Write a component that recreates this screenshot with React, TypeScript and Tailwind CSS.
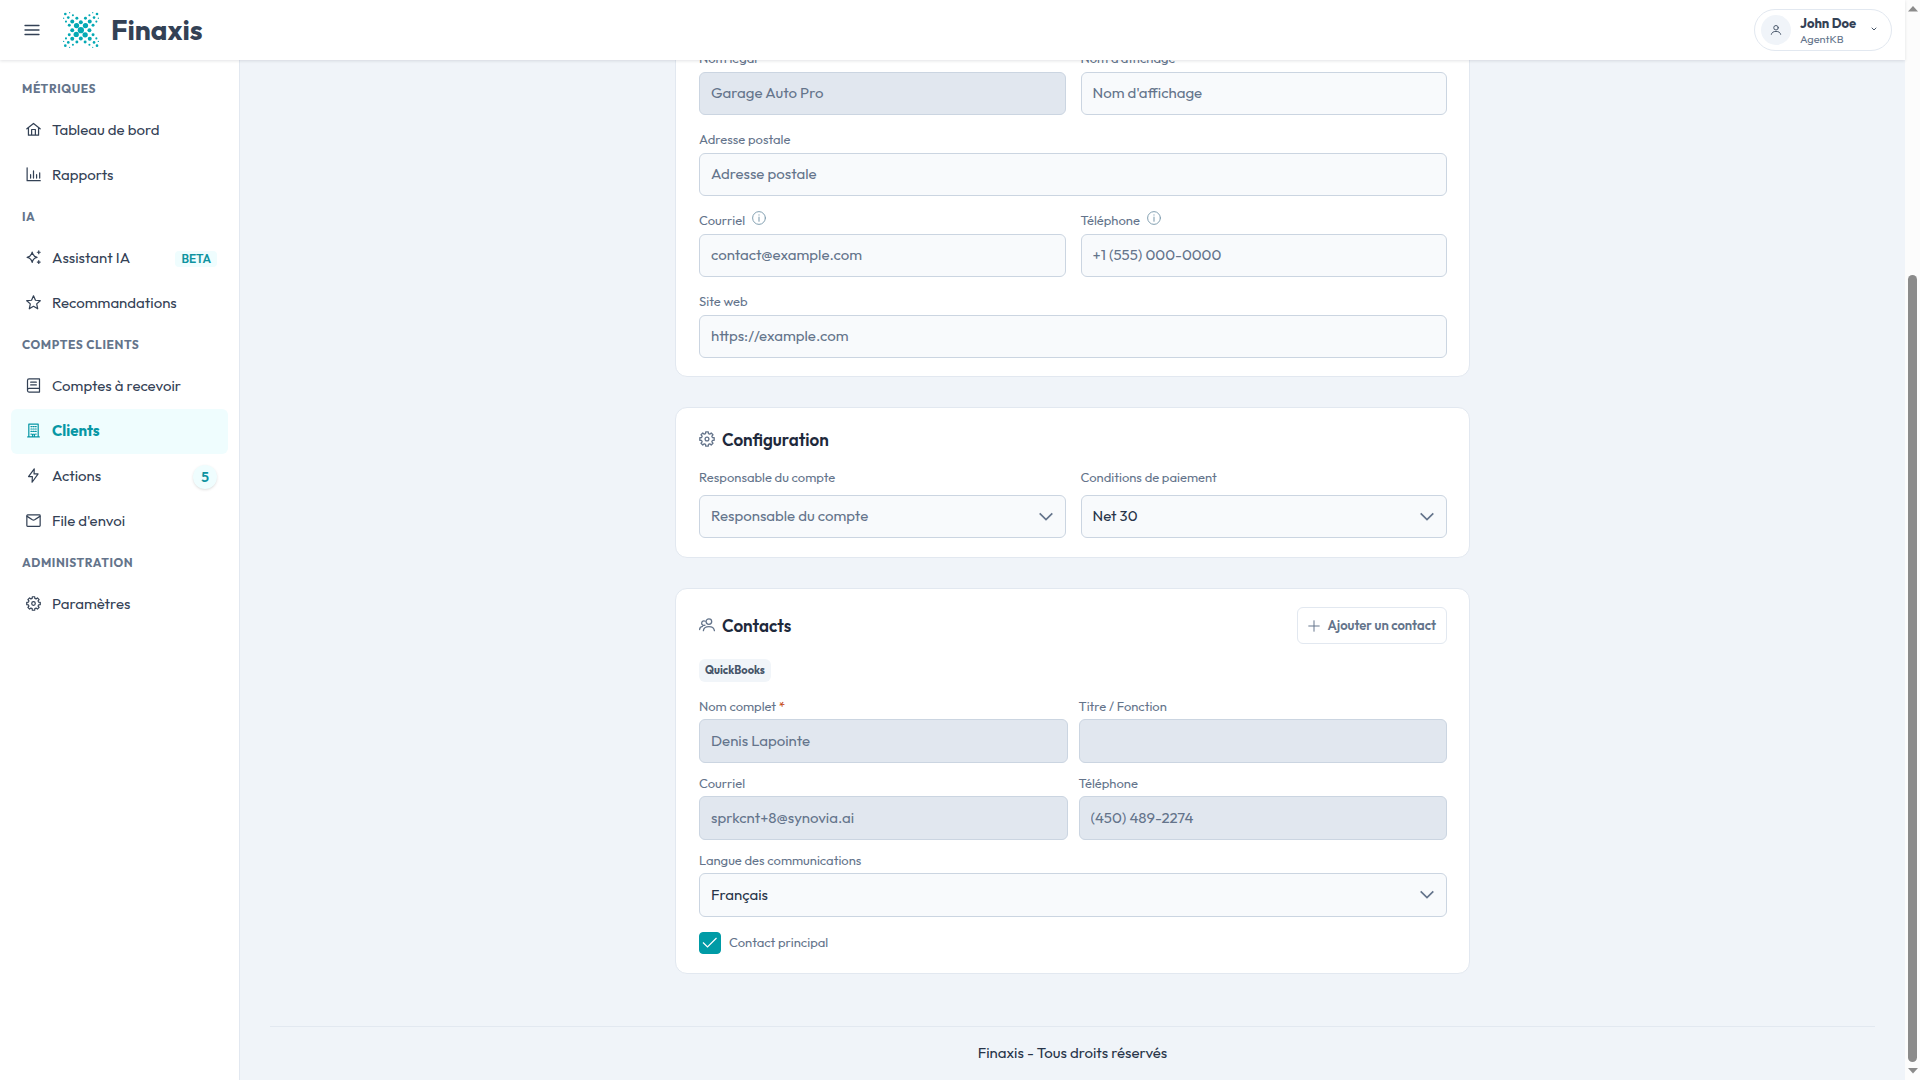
import { useState } from "react";
import type { ReactNode } from "react";

interface IconProps {
  className?: string;
  children: ReactNode;
}

const Icon: React.FC<IconProps> = ({ className = "size-[15px]", children }) => (
  <svg
    viewBox="0 0 16 16"
    className={`shrink-0 ${className}`}
    fill="none"
    stroke="currentColor"
    strokeWidth="1.3"
    strokeLinecap="round"
    strokeLinejoin="round"
    aria-hidden="true"
  >
    {children}
  </svg>
);

const HomeIcon = () => (
  <Icon>
    <path d="M.9 7.2 8 1.6l7.1 5.6M2.6 6v8.100h10.800V6M6 14V8h4v6" />
  </Icon>
);

const ChartIcon = () => (
  <Icon>
    <path d="M1.200.8v13.800h14M4.900 8.200v3.600M8 4.200v7.600M11.300 8.200v3.600M14.600 6.200v5.600" />
  </Icon>
);

const SparklesIcon = () => (
  <Icon>
    <path d="M6.600 2.200c.6 3.600 1.800 4.800 5.200 5.600-3.400.7-4.600 2-5.200 5.500-.6-3.500-1.900-4.800-5.400-5.500C4.700 7 6 5.800 6.600 2.200Z" />
    <path d="M13.600.9v3M12.100 2.400h3M13.600 11.400v3M12.100 12.900h3" />
  </Icon>
);

const StarIcon = () => (
  <Icon>
    <path d="m8 .9 2.100 4.700 5.100.5-3.800 3.400 1.100 5.200L8 12l-4.500 2.700 1.100-5.200L.8 6.100l5.100-.5L8 .9Z" />
  </Icon>
);

const BookIcon = () => (
  <Icon>
    <path d="M14.400 11V1H3.200c-1 0-1.600.6-1.600 1.600v10.800c0 1 .6 1.600 1.600 1.600h11.200v-4H3.200c-1 0-1.600.7-1.600 1.900M5 4.400h6M5 7.400h6" />
  </Icon>
);

const BuildingIcon = () => (
  <Icon>
    <path d="M3 14.600V1.200h10v13.400M1.800 14.900h12.400M7 14.500V12h2v2.500M5.300 3.800h1M7.600 3.800h1M9.900 3.800h1M5.300 6.400h1M7.600 6.400h1M9.900 6.400h1M5.300 9h1M7.600 9h1M9.900 9h1M5.300 11.800h.5M10.300 11.800h.5" />
  </Icon>
);

const BoltIcon = () => (
  <Icon>
    <path d="M8.800.9 2.700 9.200h4.100L6.500 15.200l6.400-8.900H8.600L8.800.9Z" />
  </Icon>
);

const MailIcon = () => (
  <Icon>
    <rect x=".9" y="2" width="14.200" height="12.200" rx=".8" />
    <path d="m1.200 3.600 5.600 3.700c.8.500 1.600.5 2.400 0l5.600-3.700" />
  </Icon>
);

// Eight teeth, each one given by its two outer and two inner corners
const gearPoints = Array.from({ length: 8 })
  .flatMap((_, i) =>
    [
      [-15, 5.600],
      [-10, 7.300],
      [10, 7.300],
      [15, 5.600],
    ].map(([offset, radius]) => {
      const angle = ((i * 45 + offset) * Math.PI) / 180;
      return `${(8 + radius * Math.sin(angle)).toFixed(2)},${(8 - radius * Math.cos(angle)).toFixed(2)}`;
    })
  )
  .join(" ");

const GearIcon: React.FC<{ className?: string }> = ({ className }) => (
  <Icon className={className}>
    <polygon points={gearPoints} />
    <circle cx="8" cy="8" r="1.900" />
  </Icon>
);

const UsersIcon = () => (
  <Icon className="size-4">
    <circle cx="9.900" cy="4.600" r="2.800" />
    <path d="M4.400 13.600c.3-2.700 2.300-4 5.500-4s5.100 1.300 5.500 4M6 8.200a2.300 2.300 0 1 1 .2-4M.6 12.500c.1-1.900 1.100-2.900 3-3.200" />
  </Icon>
);

const InfoIcon = () => (
  <Icon className="mb-1 size-3.5 text-[#7e9cae]">
    <circle cx="8" cy="8" r="7.300" strokeWidth="1.100" />
    <path d="M8 7v4.600M8 4.400v.3" strokeWidth="1.200" />
  </Icon>
);

// [x, y, r] around the centre dot
const logoDots: number[][] = [
  [54, 55, 9.500],
  [41, 41, 8], [68, 41, 8], [40, 68, 8], [67, 69, 8],
  [54, 31, 6], [54, 80, 6], [28, 55, 6], [80, 55, 6],
  [28, 29, 6], [81, 29, 6], [28, 81, 6], [81, 81, 6],
  [42, 19, 4.500], [68, 19, 4.500], [19, 40, 4.500], [91, 40, 4.500],
  [19, 69, 4.500], [91, 69, 4.500], [42, 91, 4.500], [67, 91, 4.500],
  [16, 17, 4], [94, 17, 4], [16, 92, 4], [94, 92, 4],
  [30, 10, 3.200], [80, 10, 3.200], [30, 99, 3.200], [80, 99, 3.200],
  [9, 29, 3.200], [101, 29, 3.200], [9, 80, 3.200], [101, 80, 3.200],
  [7, 6, 4], [103, 6, 4], [7, 102, 4], [103, 102, 4],
  [20, 2, 2], [90, 2, 2], [20, 107, 2], [90, 107, 2],
  [2, 19, 2], [107, 19, 2], [2, 89, 2], [107, 89, 2],
];

const Logo = () => (
  <svg viewBox="0 0 109 109" className="size-9" fill="#05a9b4" aria-hidden="true">
    {logoDots.map(([x, y, r]) => (
      <circle key={`${x}-${y}`} cx={x} cy={y} r={r} />
    ))}
  </svg>
);

interface NavItem {
  label: string;
  icon: ReactNode;
  active?: boolean;
  badge?: ReactNode;
}

const sections: { title: string; items: NavItem[] }[] = [
  {
    title: "MÉTRIQUES",
    items: [
      { label: "Tableau de bord", icon: <HomeIcon /> },
      { label: "Rapports", icon: <ChartIcon /> },
    ],
  },
  {
    title: "IA",
    items: [
      {
        label: "Assistant IA",
        icon: <SparklesIcon />,
        badge: (
          <span className="block rounded bg-[#effdfe] px-1.5 text-xs leading-4 font-semibold text-[#0e93a0]">
            BETA
          </span>
        ),
      },
      { label: "Recommandations", icon: <StarIcon /> },
    ],
  },
  {
    title: "COMPTES CLIENTS",
    items: [
      { label: "Comptes à recevoir", icon: <BookIcon /> },
      { label: "Clients", icon: <BuildingIcon />, active: true },
      {
        label: "Actions",
        icon: <BoltIcon />,
        badge: (
          <span className="flex size-6 items-center justify-center rounded-full bg-[#effdfe] text-sm font-semibold text-[#0e93a0] shadow-sm">
            5
          </span>
        ),
      },
      { label: "File d'envoi", icon: <MailIcon /> },
    ],
  },
  {
    title: "ADMINISTRATION",
    items: [{ label: "Paramètres", icon: <GearIcon /> }],
  },
];

const Header: React.FC<{ onToggle: () => void }> = ({ onToggle }) => (
  <header className="relative z-10 flex h-[60px] shrink-0 items-center justify-between bg-white pr-[13px] pl-6 shadow-[0_1px_3px_rgba(15,23,42,0.12)]">
    <div className="flex items-center">
      <button type="button" aria-label="Menu" onClick={onToggle} className="text-[#334155]">
        <Icon className="size-4">
          <path d="M1 3.500h14M1 8h14M1 12.500h14" />
        </Icon>
      </button>
      <a href="#" className="ml-[23px] flex items-center gap-3">
        <Logo />
        <span className="text-[28px] leading-9 font-bold text-[#334155]">Finaxis</span>
      </a>
    </div>
    <button
      type="button"
      className="flex h-[42px] w-[138px] items-center rounded-full border border-[#e2e8f0] pr-[13px] pl-1.5 text-left"
    >
      <span className="flex size-[30px] items-center justify-center rounded-full bg-[#f0f4f9] text-[#475569]">
        <Icon className="size-3">
          <circle cx="8" cy="5" r="3" />
          <path d="M1.800 13.800c.6-2.700 2.700-3.900 6.200-3.900s5.600 1.200 6.200 3.900" />
        </Icon>
      </span>
      <span className="ml-[9px] flex flex-col pt-px">
        <span className="text-[13px] leading-4 font-bold whitespace-nowrap text-[#334155]">John Doe</span>
        <span className="text-[11px] leading-4 text-[#64748b]">AgentKB</span>
      </span>
      <Icon className="mb-0.5 ml-auto size-2 text-[#475569]">
        <path d="m4 6 4 4 4-4" strokeWidth="2" />
      </Icon>
    </button>
  </header>
);

const Sidebar = () => (
  <nav className="w-60 shrink-0 border-r border-[#e2e8f0] bg-white px-[11px] pt-2.5">
    {sections.map((section) => (
      <div key={section.title}>
        <h2 className="flex h-[38px] items-center pl-[11px] text-xs font-bold tracking-wider text-[#64748b]">
          {section.title}
        </h2>
        {section.items.map((item) => (
          <a
            key={item.label}
            href="#"
            className={`flex h-[45px] items-center gap-[11px] rounded-md pr-[11px] pl-[15px] text-[15px] ${
              item.active ? "bg-[#effdfe] font-bold text-[#0797a5]" : "text-[#334155]"
            }`}
          >
            <span className="pb-0.5">{item.icon}</span>
            <span>{item.label}</span>
            {item.badge && <span className="ml-auto">{item.badge}</span>}
          </a>
        ))}
      </div>
    ))}
  </nav>
);

interface FieldProps {
  id: string;
  label: string;
  value?: string;
  placeholder?: string;
  disabled?: boolean;
  required?: boolean;
  info?: boolean;
  tall?: boolean;
}

const Field: React.FC<FieldProps> = ({ id, label, value, placeholder, disabled, required, info, tall }) => (
  <div className={`flex flex-col ${tall ? "gap-[3px]" : "gap-1"}`}>
    <div className="flex h-5 items-center gap-[7px]">
      <label htmlFor={id} className="text-[13px] leading-5 text-[#64748b]">
        {label}
        {required && <span className="text-[#c2410c]"> *</span>}
      </label>
      {info && <InfoIcon />}
    </div>
    <input
      id={id}
      type="text"
      defaultValue={value}
      placeholder={placeholder}
      disabled={disabled}
      className={`w-full rounded-md border border-[#cbd5e1] bg-[#f8fafc] px-[11px] pb-0.5 text-[15px] text-[#334155] placeholder:text-[#64748b] disabled:bg-[#e1e7ef] disabled:text-[#64748b] ${
        tall ? "h-11" : "h-[43px]"
      }`}
    />
  </div>
);

interface SelectFieldProps {
  id: string;
  label: string;
  options: string[];
  muted?: boolean;
  tall?: boolean;
}

const SelectField: React.FC<SelectFieldProps> = ({ id, label, options, muted, tall }) => (
  <div className={`flex flex-col ${tall ? "gap-[3px]" : "gap-2"}`}>
    <label htmlFor={id} className="text-[13px] leading-5 text-[#64748b]">
      {label}
    </label>
    <div className="relative">
      <select
        id={id}
        className={`w-full appearance-none rounded-md border border-[#cbd5e1] bg-[#f8fafc] px-[11px] text-[15px] ${
          muted ? "text-[#64748b]" : "text-[#273449]"
        } ${tall ? "h-11" : "h-[43px]"}`}
      >
        {options.map((option) => (
          <option key={option}>{option}</option>
        ))}
      </select>
      <svg
        viewBox="0 0 14 14"
        className="pointer-events-none absolute inset-y-0 right-[13px] my-auto size-3.5"
        fill="none"
        stroke="#64748b"
        strokeWidth="1.700"
        aria-hidden="true"
      >
        <path d="m.7 3.300 6.300 6.200 6.300-6.200" />
      </svg>
    </div>
  </div>
);

const Card: React.FC<{ className?: string; children: ReactNode }> = ({ className = "pb-[19px]", children }) => (
  <section className={`rounded-xl border border-[#e2e8f0] bg-white pt-[18px] pr-[22px] pl-[23px] ${className}`}>
    {children}
  </section>
);

const CardTitle: React.FC<{ icon: ReactNode; title: string }> = ({ icon, title }) => (
  <h3 className="flex h-7 items-center gap-[7px] text-[17px] font-semibold text-[#1e293b]">
    <span className="pb-0.5 text-[#64748b]">{icon}</span>
    {title}
  </h3>
);

const Scrollbar = () => (
  <div className="flex w-[15px] shrink-0 flex-col items-center bg-[#fcfcfc] py-1.5" aria-hidden="true">
    <svg viewBox="0 0 10 6" className="h-1.5 w-2.5" fill="#8b8b8b">
      <path d="M0 5.500 5 0l5 5.500Z" />
    </svg>
    <div className="flex w-[9px] flex-1 flex-col py-1.5">
      <div className="flex-[257]" />
      <div className="flex-[787] rounded-full bg-[#8b8b8b]" />
    </div>
    <svg viewBox="0 0 10 6" className="h-1.5 w-2.5" fill="#8b8b8b">
      <path d="M0 0h10L5 5.500Z" />
    </svg>
  </div>
);

const App: React.FC = () => {
  const [menuOpen, setMenuOpen] = useState<boolean>(true);

  return (
    <div className="flex h-screen overflow-hidden bg-[#f0f4f9] font-['Outfit','Lato',sans-serif] text-[#334155]">
      <div className="flex min-w-0 flex-1 flex-col">
        <Header onToggle={() => setMenuOpen(!menuOpen)} />
        <div className="flex min-h-0 flex-1">
          {menuOpen && <Sidebar />}

          {/* Scrolled to the end of the form */}
          <main className="flex min-w-0 flex-1 flex-col justify-end overflow-hidden px-[30px]">
            <form className="mx-auto flex w-full max-w-[795px] flex-col gap-[30px]">
              <Card className="pb-[18px]">
                <div className="grid grid-cols-2 gap-x-[15px] gap-y-3.5">
                  <Field id="legal" label="Nom légal" value="Garage Auto Pro" disabled />
                  <Field id="display" label="Nom d'affichage" placeholder="Nom d'affichage" />
                  <div className="col-span-2">
                    <Field id="address" label="Adresse postale" placeholder="Adresse postale" />
                  </div>
                  <Field id="email" label="Courriel" placeholder="contact@example.com" info />
                  <Field id="phone" label="Téléphone" placeholder="+1 (555) 000-0000" info />
                  <div className="col-span-2">
                    <Field id="website" label="Site web" placeholder="https://example.com" />
                  </div>
                </div>
              </Card>

              <Card>
                <CardTitle icon={<GearIcon className="size-4" />} title="Configuration" />
                <div className="mt-[13px] grid grid-cols-2 gap-[15px]">
                  <SelectField id="owner" label="Responsable du compte" options={["Responsable du compte"]} muted />
                  <SelectField id="terms" label="Conditions de paiement" options={["Net 30", "Net 45", "Net 60"]} />
                </div>
              </Card>

              <Card>
                <div className="flex items-center justify-between">
                  <CardTitle icon={<UsersIcon />} title="Contacts" />
                  <button
                    type="button"
                    className="flex h-[37px] items-center gap-2 rounded-md border border-[#e2e8f0] px-2.5 text-[13px] font-semibold text-[#64748b]"
                  >
                    <Icon className="size-3">
                      <path d="M8 1v14M1 8h14" />
                    </Icon>
                    Ajouter un contact
                  </button>
                </div>
                <div className="mt-[15px] flex">
                  <span className="rounded-md bg-[#f1f5f9] px-1.5 text-[11px] leading-[23px] font-bold text-[#475569]">
                    QuickBooks
                  </span>
                </div>
                <div className="mt-3.5 grid grid-cols-2 gap-x-[11px] gap-y-2.5">
                  <Field id="contact-name" label="Nom complet" value="Denis Lapointe" disabled required tall />
                  <Field id="contact-title" label="Titre / Fonction" disabled tall />
                  <Field id="contact-email" label="Courriel" value="sprkcnt+8@synovia.ai" disabled tall />
                  <Field id="contact-phone" label="Téléphone" value="(450) 489-2274" disabled tall />
                  <div className="col-span-2">
                    <SelectField
                      id="language"
                      label="Langue des communications"
                      options={["Français", "English"]}
                      tall
                    />
                  </div>
                </div>
                <div className="mt-[15px] flex items-center gap-2">
                  <span className="relative flex size-[22px]">
                    <input
                      id="primary"
                      type="checkbox"
                      defaultChecked
                      className="peer size-[22px] appearance-none rounded border border-[#cbd5e1] checked:border-[#009ba6] checked:bg-[#009ba6]"
                    />
                    <svg
                      viewBox="0 0 22 22"
                      className="pointer-events-none absolute inset-0 hidden size-[22px] peer-checked:block"
                      fill="none"
                      stroke="white"
                      strokeWidth="1.200"
                      aria-hidden="true"
                    >
                      <path d="m4 10.500 4.500 4.500L17.500 6" />
                    </svg>
                  </span>
                  <label htmlFor="primary" className="pb-0.5 text-[13px] leading-5 text-[#64748b]">
                    Contact principal
                  </label>
                </div>
              </Card>
            </form>

            <footer className="mt-[52px] border-t border-[#e2e8f0] pt-[15px] pb-[17px] text-center text-[15px] leading-[21px] text-[#273449]">
              Finaxis - Tous droits réservés
            </footer>
          </main>
        </div>
      </div>
      <Scrollbar />
    </div>
  );
};

export default App;
